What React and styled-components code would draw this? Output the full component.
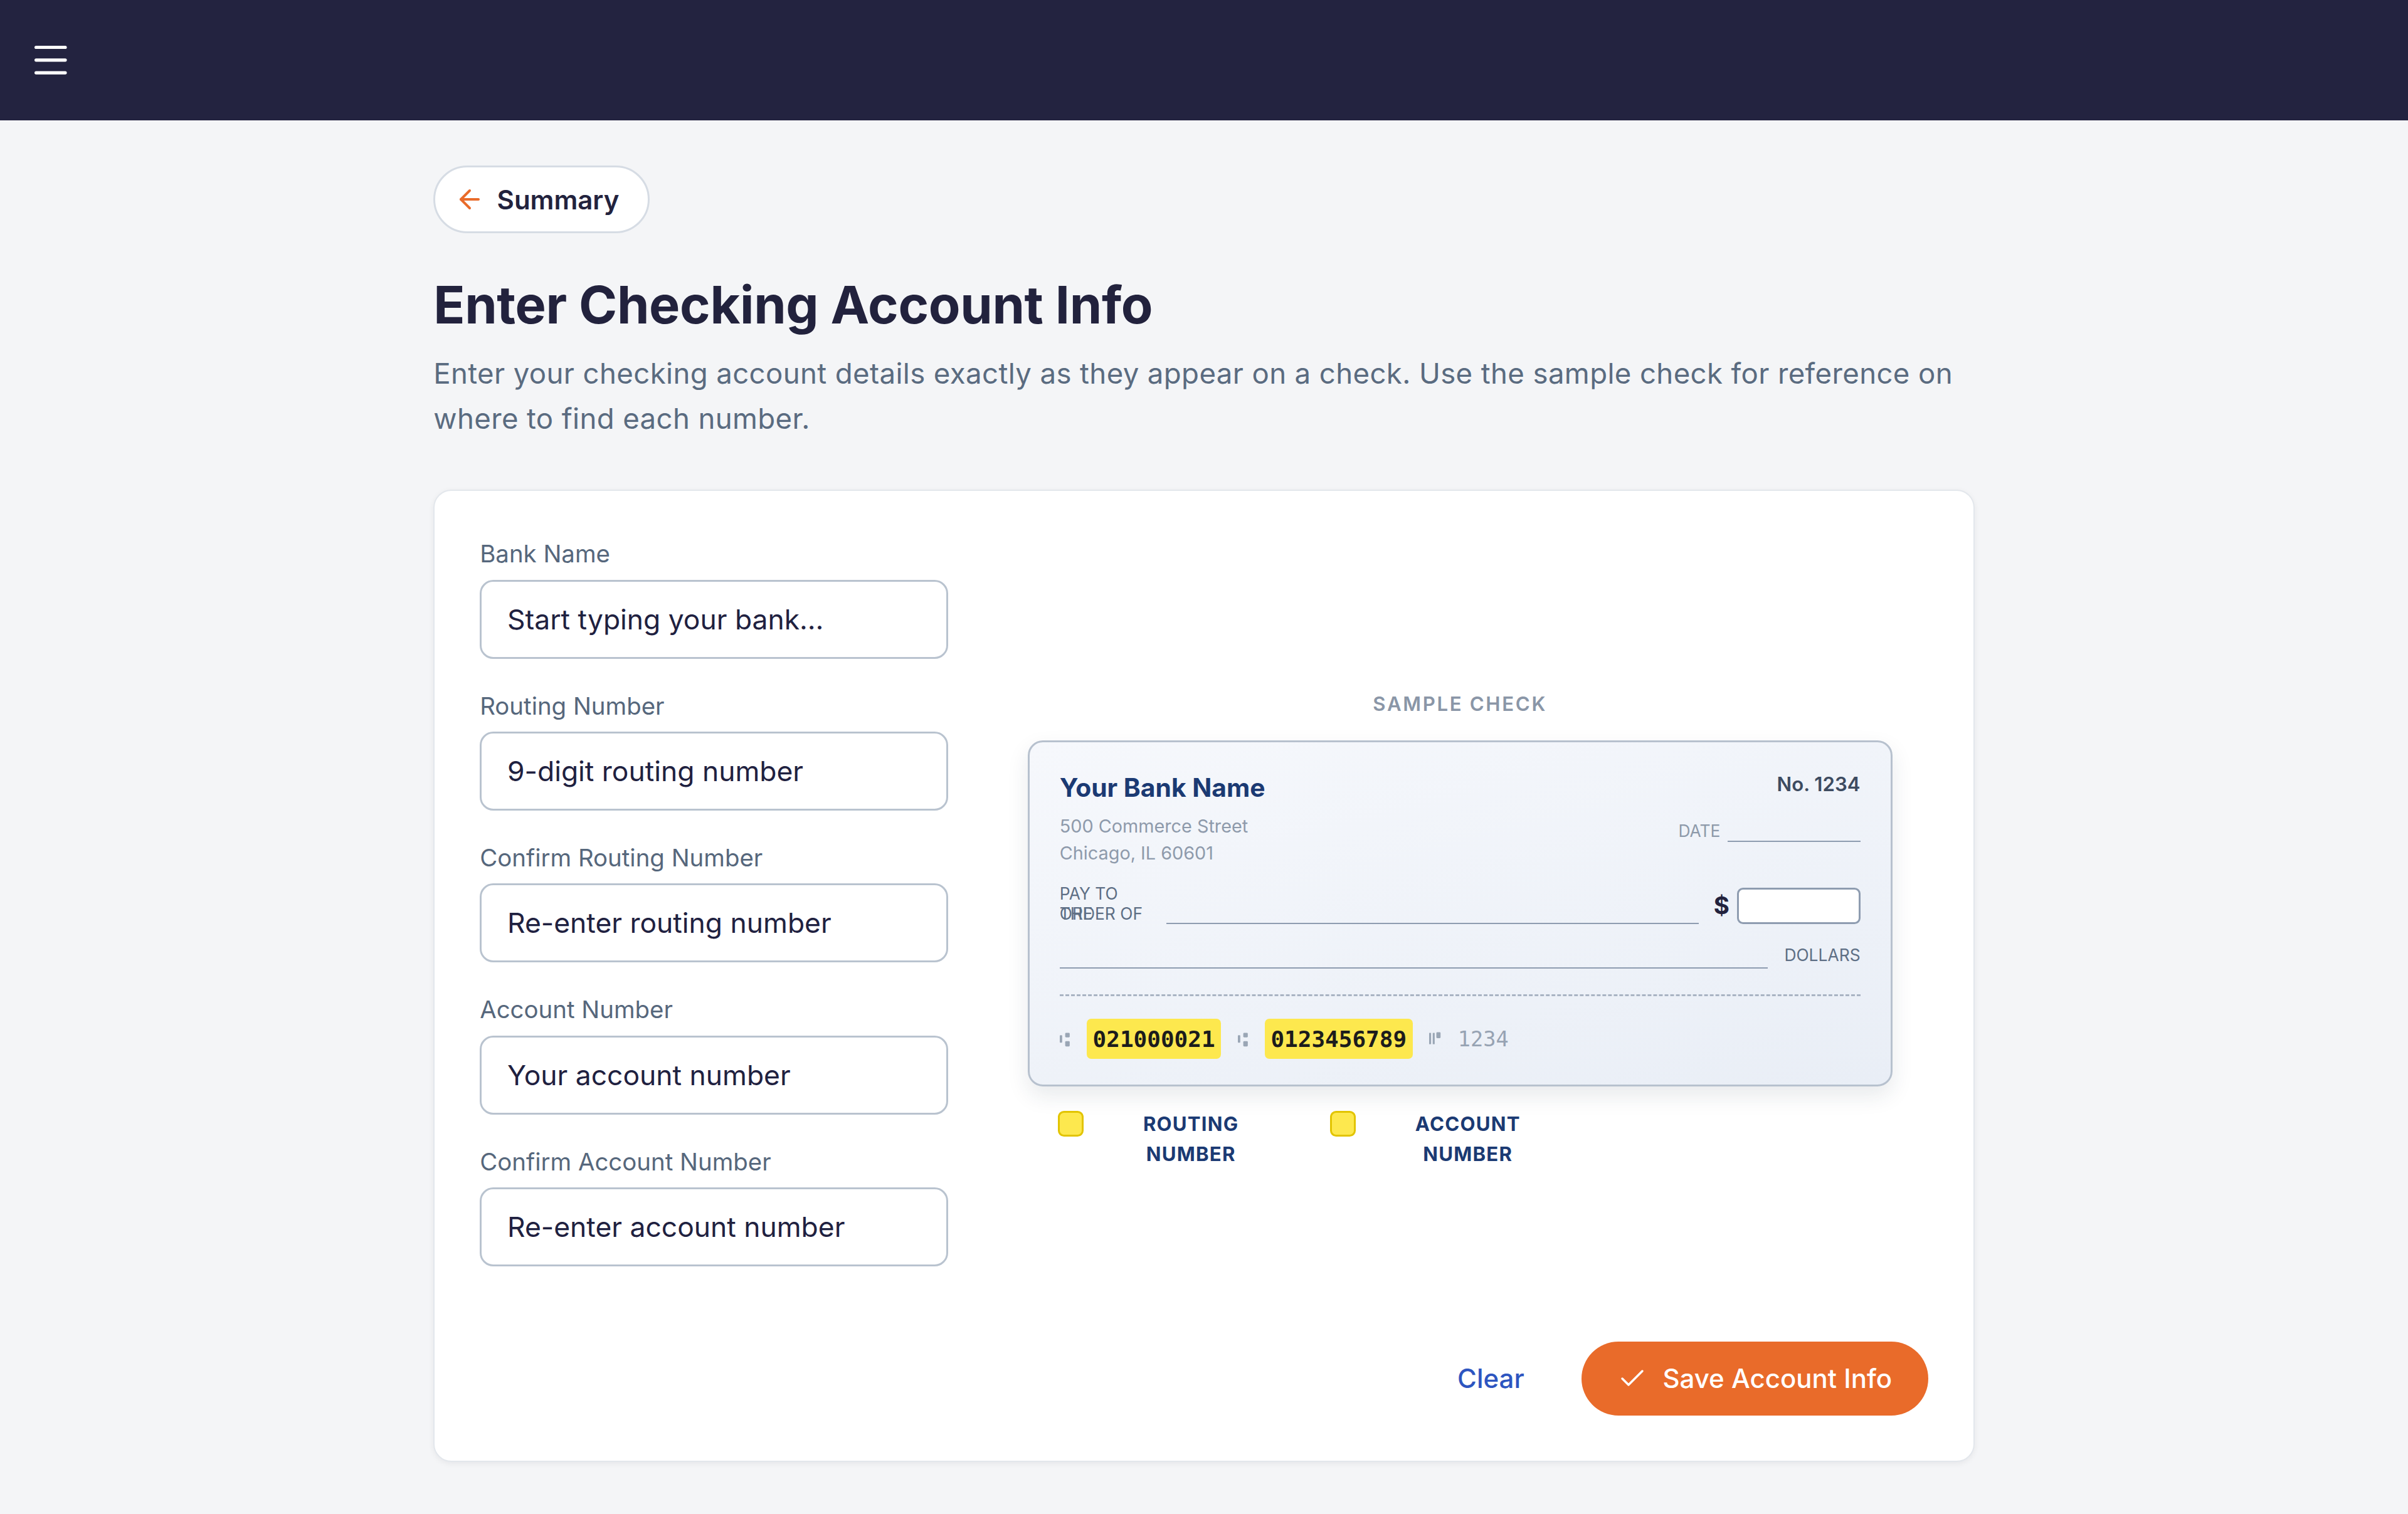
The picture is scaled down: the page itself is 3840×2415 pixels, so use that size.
import React from 'react';
import styled, { createGlobalStyle } from 'styled-components';
import { ArrowLeft, Check, Menu } from 'lucide-react';

const GlobalStyle = createGlobalStyle`
  html, body {
    margin: 0;
    padding: 0;
    background: #f4f5f7;
  }
  * {
    box-sizing: border-box;
  }
`;

// the reference was captured at a 2.4 device scale
const Screen = styled.div`
  zoom: 2.4;
  min-height: 1006px;
  background: #f4f5f7;
  font-family: Inter, 'Noto Sans', sans-serif;
`;

const TopBar = styled.header`
  height: 80px;
  background: #232340;
  display: flex;
  align-items: center;
  padding: 0 19px;
  color: #ffffff;
`;

const Main = styled.main`
  max-width: 1024px;
  margin: 0 auto;
  padding-top: 30px;
`;

const BackButton = styled.button`
  display: inline-flex;
  align-items: center;
  gap: 8px;
  height: 45px;
  padding: 0 19px 0 13px;
  border: 1.5px solid #d6dce4;
  border-radius: 999px;
  background: #ffffff;
  color: #22223d;
  font-family: inherit;
  font-size: 17.5px;
  font-weight: 600;
  cursor: pointer;
`;

const Title = styled.h1`
  margin: 27px 0 0;
  font-size: 34.5px;
  line-height: 1.2;
  font-weight: 700;
  color: #22223d;
  letter-spacing: -0.15px;
`;

const Intro = styled.p`
  margin: 10px 0 0;
  font-size: 19px;
  line-height: 30px;
  letter-spacing: 0.15px;
  color: #5a6b80;
`;

const Card = styled.section`
  margin-top: 32px;
  background: #ffffff;
  border: 1px solid #e3e7ec;
  border-radius: 12px;
  padding: 31px 30px 30px;
  box-shadow: 0 1px 4px rgba(16, 24, 40, 0.06);
`;

const Columns = styled.div`
  display: grid;
  grid-template-columns: 311px 574.5px;
  column-gap: 53px;
`;

const FormColumn = styled.div`
  display: flex;
  flex-direction: column;
  gap: 20.5px;
`;

const Field = styled.label`
  display: flex;
  flex-direction: column;
`;

const FieldLabel = styled.span`
  font-size: 16px;
  line-height: 22px;
  color: #56677c;
  margin-bottom: 6px;
`;

const TextInput = styled.input`
  height: 52.5px;
  width: 100%;
  border: 1.5px solid #b9c3cf;
  border-radius: 9px;
  padding: 0 17px;
  background: #ffffff;
  font-family: inherit;
  font-size: 18.5px;
  color: #1f2140;
  outline: none;
  &::placeholder {
    color: #1f2140;
    opacity: 1;
  }
`;

const PreviewColumn = styled.div`
  display: flex;
  flex-direction: column;
  padding-top: 102.5px;
`;

const PreviewLabel = styled.div`
  text-align: center;
  font-size: 13px;
  line-height: 17px;
  font-weight: 600;
  letter-spacing: 1.1px;
  color: #8a96a7;
  margin-bottom: 15.5px;
`;

const SampleCheck = styled.div`
  border: 1.5px solid #b7c1ce;
  border-radius: 10px;
  background: linear-gradient(165deg, #f6f8fc 0%, #e9eef6 100%);
  padding: 19px 20px 17px;
  box-shadow: 0 6px 14px rgba(30, 45, 70, 0.1);
`;

const CheckTop = styled.div`
  display: flex;
  justify-content: space-between;
`;

const BankName = styled.div`
  font-size: 17px;
  line-height: 22px;
  font-weight: 700;
  color: #1b3a73;
`;

const Address = styled.div`
  margin-top: 5.5px;
  font-size: 12px;
  line-height: 18px;
  color: #8e9aab;
`;

const CheckMeta = styled.div`
  display: flex;
  flex-direction: column;
  align-items: flex-end;
`;

const CheckNo = styled.div`
  font-size: 13px;
  line-height: 18px;
  font-weight: 600;
  color: #3d4b60;
`;

const DateRow = styled.div`
  margin-top: 15px;
  display: flex;
  align-items: flex-end;
  gap: 5px;
`;

const TinyText = styled.span`
  font-size: 11px;
  line-height: ${(p) => p.$lh || 14}px;
  color: ${(p) => p.$color || '#5e6f85'};
  margin-bottom: ${(p) => p.$mb || 0}px;
  white-space: nowrap;
`;

const Rule = styled.div`
  height: 14px;
  width: ${(p) => (p.$width ? `${p.$width}px` : 'auto')};
  flex: ${(p) => (p.$width ? '0 0 auto' : '1')};
  border-bottom: 1px solid #8e9cb0;
  margin-left: ${(p) => p.$ml || 0}px;
`;

const PayRow = styled.div`
  margin-top: 11px;
  display: flex;
  align-items: flex-end;
`;

const PayLabel = styled.div`
  position: relative;
  display: flex;
  flex-direction: column;
`;

// "THE" is printed over the start of "ORDER OF" on the sample check
const Overprint = styled.span`
  position: absolute;
  left: 0;
  bottom: 0;
  font-size: 11px;
  line-height: 13.5px;
  color: #5e6f85;
`;

const Dollar = styled.span`
  font-size: 16px;
  line-height: 24px;
  font-weight: 700;
  color: #22223d;
  margin: 0 5px 0 10px;
`;

const AmountBox = styled.div`
  width: 82px;
  height: 24px;
  background: #ffffff;
  border: 1.5px solid #8e9cb0;
  border-radius: 4px;
`;

const DollarsRow = styled.div`
  margin-top: 14px;
  display: flex;
  align-items: flex-end;
  gap: 11px;
`;

const Perforation = styled.div`
  margin-top: 17px;
  border-top: 1.5px dashed #a9b4c3;
`;

const MicrRow = styled.div`
  margin-top: 15px;
  display: flex;
  align-items: center;
  gap: 11px;
`;

const Highlight = styled.span`
  display: inline-flex;
  align-items: center;
  height: 26.5px;
  padding: 0 4px;
  border-radius: 3px;
  background: #fde84e;
  font-family: 'DejaVu Sans Mono', 'Liberation Mono', monospace;
  font-weight: 700;
  font-size: 15px;
  color: #1c1c1c;
`;

const MicrPlain = styled.span`
  font-family: 'DejaVu Sans Mono', 'Liberation Mono', monospace;
  font-size: 14px;
  color: #97a3b3;
`;

const Legend = styled.div`
  margin-top: 15px;
  display: flex;
  gap: 29px;
  padding-left: 20px;
`;

const LegendItem = styled.div`
  display: flex;
  align-items: flex-start;
  gap: 8px;
`;

const Swatch = styled.span`
  width: 17px;
  height: 17px;
  margin-top: 1.5px;
  border-radius: 4px;
  background: #fde84e;
  border: 1.5px solid #e2c400;
`;

const LegendText = styled.div`
  width: ${(p) => p.$width}px;
  text-align: center;
  font-size: 13px;
  line-height: 20px;
  font-weight: 700;
  letter-spacing: 0.5px;
  text-transform: uppercase;
  color: #1b3a73;
`;

const Actions = styled.div`
  margin-top: 50px;
  display: flex;
  justify-content: flex-end;
  align-items: center;
  gap: 22px;
`;

const ClearButton = styled.button`
  height: 49px;
  padding: 0 16px;
  border: none;
  background: none;
  font-family: inherit;
  font-size: 17.5px;
  font-weight: 500;
  color: #2d55c0;
  cursor: pointer;
`;

const SaveButton = styled.button`
  display: inline-flex;
  align-items: center;
  gap: 10px;
  height: 49px;
  padding: 0 24px;
  border: none;
  border-radius: 999px;
  background: #e96b2a;
  color: #ffffff;
  font-family: inherit;
  font-size: 17.5px;
  font-weight: 500;
  cursor: pointer;
`;

const TransitMark = () => (
  <svg width="7" height="11" viewBox="0 0 7 11" fill="#9aa6b5">
    <rect x="0" y="3" width="1.6" height="5" rx="0.5" />
    <rect x="3.6" y="1.5" width="3" height="3" rx="0.6" />
    <rect x="3.6" y="7" width="3" height="3.5" rx="0.6" />
  </svg>
);

const OnUsMark = () => (
  <svg width="8" height="11" viewBox="0 0 8 11" fill="#9aa6b5">
    <rect x="0" y="1.5" width="1.3" height="7.5" />
    <rect x="2.4" y="1.5" width="1.3" height="7.5" />
    <rect x="4.8" y="1" width="2.8" height="4" rx="0.6" />
  </svg>
);

const fields = [
  { label: 'Bank Name', placeholder: 'Start typing your bank…' },
  { label: 'Routing Number', placeholder: '9-digit routing number' },
  { label: 'Confirm Routing Number', placeholder: 'Re-enter routing number' },
  { label: 'Account Number', placeholder: 'Your account number' },
  { label: 'Confirm Account Number', placeholder: 'Re-enter account number' },
];

const App = () => {
  return (
    <Screen>
      <GlobalStyle />
      <TopBar>
        <Menu size={29} strokeWidth={1.8} />
      </TopBar>

      <Main>
        <BackButton>
          <ArrowLeft size={20} color="#e96b2a" strokeWidth={2} />
          Summary
        </BackButton>

        <Title>Enter Checking Account Info</Title>
        <Intro>
          Enter your checking account details exactly as they appear on a check. Use the sample check for
          reference on where to find each number.
        </Intro>

        <Card>
          <Columns>
            <FormColumn>
              {fields.map((f) => (
                <Field key={f.label}>
                  <FieldLabel>{f.label}</FieldLabel>
                  <TextInput type="text" placeholder={f.placeholder} />
                </Field>
              ))}
            </FormColumn>

            <PreviewColumn>
              <PreviewLabel>SAMPLE CHECK</PreviewLabel>
              <SampleCheck>
                <CheckTop>
                  <div>
                    <BankName>Your Bank Name</BankName>
                    <Address>
                      500 Commerce Street
                      <br />
                      Chicago, IL 60601
                    </Address>
                  </div>
                  <CheckMeta>
                    <CheckNo>No. 1234</CheckNo>
                    <DateRow>
                      <TinyText $color="#8d99a9">DATE</TinyText>
                      <Rule $width={88} />
                    </DateRow>
                  </CheckMeta>
                </CheckTop>

                <PayRow>
                  <PayLabel>
                    <TinyText $lh={13.5}>PAY TO</TinyText>
                    <TinyText $lh={13.5}>ORDER OF</TinyText>
                    <Overprint>THE</Overprint>
                  </PayLabel>
                  <Rule $ml={16} />
                  <Dollar>$</Dollar>
                  <AmountBox />
                </PayRow>

                <DollarsRow>
                  <Rule />
                  <TinyText $mb={2}>DOLLARS</TinyText>
                </DollarsRow>

                <Perforation />

                <MicrRow>
                  <TransitMark />
                  <Highlight>021000021</Highlight>
                  <TransitMark />
                  <Highlight>0123456789</Highlight>
                  <OnUsMark />
                  <MicrPlain>1234</MicrPlain>
                </MicrRow>
              </SampleCheck>

              <Legend>
                <LegendItem>
                  <Swatch />
                  <LegendText $width={127}>
                    Routing
                    <br />
                    Number
                  </LegendText>
                </LegendItem>
                <LegendItem>
                  <Swatch />
                  <LegendText $width={133}>
                    Account
                    <br />
                    Number
                  </LegendText>
                </LegendItem>
              </Legend>
            </PreviewColumn>
          </Columns>

          <Actions>
            <ClearButton>Clear</ClearButton>
            <SaveButton>
              <Check size={20} strokeWidth={1.75} />
              Save Account Info
            </SaveButton>
          </Actions>
        </Card>
      </Main>
    </Screen>
  );
};

export default App;
